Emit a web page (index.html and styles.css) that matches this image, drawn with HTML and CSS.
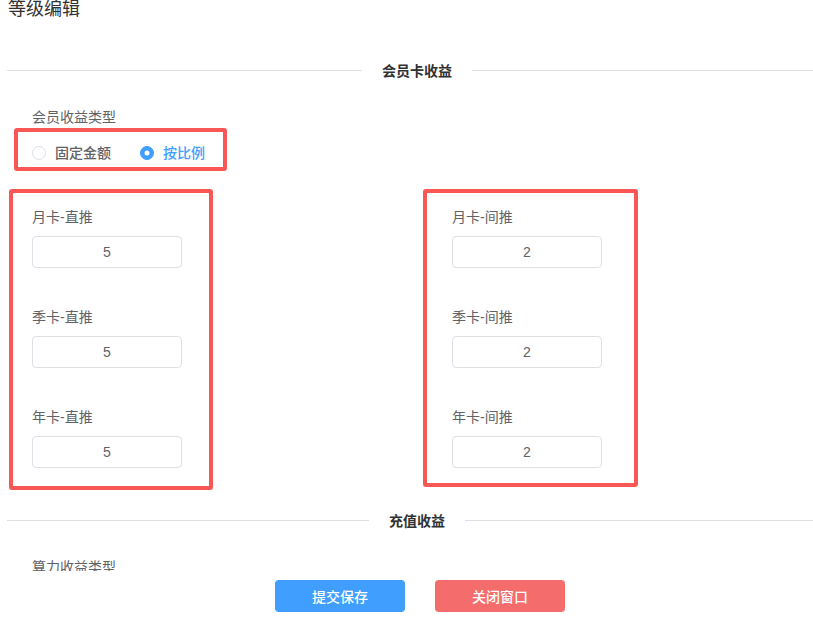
FILE: index.html
```html
<!DOCTYPE html>
<html lang="zh-CN">
<head>
    <meta charset="UTF-8">
    <meta name="viewport" content="width=device-width, initial-scale=1.0">
    <title>等级编辑</title>
    <link rel="stylesheet" href="styles.css">
</head>
<body>
    <div class="page">
        <div class="content">
            <h2 class="title">等级编辑</h2>

            <div class="divider"><span class="divider-text">会员卡收益</span></div>

            <div class="field-label">会员收益类型</div>
            <div class="radio-box mark">
                <label class="radio">
                    <span class="radio-dot"></span>
                    <span class="radio-text">固定金额</span>
                </label>
                <label class="radio checked">
                    <span class="radio-dot"></span>
                    <span class="radio-text">按比例</span>
                </label>
            </div>

            <div class="cols">
                <div class="box box-left mark">
                    <div class="item">
                        <div class="item-label">月卡-直推</div>
                        <input class="num-input" type="text" value="5">
                    </div>
                    <div class="item">
                        <div class="item-label">季卡-直推</div>
                        <input class="num-input" type="text" value="5">
                    </div>
                    <div class="item">
                        <div class="item-label">年卡-直推</div>
                        <input class="num-input" type="text" value="5">
                    </div>
                </div>

                <div class="box box-right mark">
                    <div class="item">
                        <div class="item-label">月卡-间推</div>
                        <input class="num-input" type="text" value="2">
                    </div>
                    <div class="item">
                        <div class="item-label">季卡-间推</div>
                        <input class="num-input" type="text" value="2">
                    </div>
                    <div class="item">
                        <div class="item-label">年卡-间推</div>
                        <input class="num-input" type="text" value="2">
                    </div>
                </div>
            </div>

            <div class="divider divider-second"><span class="divider-text">充值收益</span></div>

            <div class="field-label field-label-second">算力收益类型</div>
        </div>

        <div class="footer">
            <button class="btn btn-primary">提交保存</button>
            <button class="btn btn-danger">关闭窗口</button>
        </div>
    </div>
</body>
</html>
```

FILE: styles.css
```css
* {
    box-sizing: border-box;
}

body {
    margin: 0;
    background-color: #fff;
    font-family: "Liberation Sans", "Noto Sans CJK SC", sans-serif;
    color: #606266;
}

.page {
    width: 813px;
    height: 624px;
    overflow: hidden;
}

.content {
    height: 571px;
    overflow: hidden;
}

.title {
    margin: 0;
    padding-left: 8px;
    font-size: 18px;
    line-height: 18px;
    font-weight: normal;
    color: #303133;
}

/* dividers */
.divider {
    position: relative;
    width: 820px;
    height: 1px;
    margin: 52px 0 0 7px;
    background-color: #dcdfe6;
}

.divider-second {
    margin-top: 30px;
}

.divider-text {
    position: absolute;
    left: 50%;
    top: 50%;
    transform: translate(-50%, -50%);
    padding: 0 20px;
    background-color: #fff;
    font-size: 14px;
    line-height: 20px;
    font-weight: bold;
    color: #303133;
    white-space: nowrap;
}

.field-label {
    margin: 36px 0 0 32px;
    font-size: 14px;
    line-height: 20px;
    color: #606266;
    white-space: nowrap;
}

/* red annotation frames */
.mark {
    border: 4px solid #f95656;
    border-radius: 3px;
}

.radio-box {
    display: flex;
    align-items: center;
    width: 213px;
    height: 43px;
    margin: 1px 0 0 14px;
    padding: 6px 0 0 14px;
}

.radio {
    display: flex;
    flex-shrink: 0;
    align-items: center;
    margin-right: 29px;
    font-size: 14px;
    line-height: 20px;
    font-weight: 500;
    color: #606266;
    white-space: nowrap;
}

.radio-dot {
    position: relative;
    flex-shrink: 0;
    width: 14px;
    height: 14px;
    border: 1px solid #dcdfe6;
    border-radius: 50%;
    background-color: #fff;
}

.radio-text {
    padding-left: 9px;
}

.radio.checked {
    color: #409eff;
}

.radio.checked .radio-dot {
    border-color: #409eff;
    background-color: #409eff;
}

.radio.checked .radio-dot::after {
    content: "";
    position: absolute;
    left: 50%;
    top: 50%;
    width: 5px;
    height: 5px;
    border-radius: 50%;
    background-color: #fff;
    transform: translate(-50%, -50%);
}

/* two columns of inputs */
.cols {
    display: flex;
    align-items: flex-start;
    margin-top: 18px;
    padding-left: 9px;
}

.box {
    padding-top: 14px;
}

.box-left {
    width: 204px;
    height: 301px;
    padding-left: 19px;
}

.box-right {
    width: 215px;
    height: 298px;
    margin-left: 210px;
    padding-left: 25px;
}

.item + .item {
    margin-top: 39px;
}

.item-label {
    font-size: 14px;
    line-height: 20px;
    color: #606266;
}

.num-input {
    display: block;
    width: 150px;
    height: 32px;
    margin-top: 9px;
    padding: 0 15px;
    border: 1px solid #dcdfe6;
    border-radius: 4px;
    font-family: inherit;
    font-size: 14px;
    color: #606266;
    text-align: center;
    outline: none;
}

/* footer buttons */
.footer {
    display: flex;
    gap: 30px;
    margin-top: 9px;
    padding-left: 275px;
}

.btn {
    width: 130px;
    height: 32px;
    border: none;
    border-radius: 4px;
    font-family: inherit;
    font-size: 14px;
    font-weight: 500;
    color: #fff;
    cursor: pointer;
}

.btn-primary {
    background-color: #409eff;
}

.btn-danger {
    background-color: #f56c6c;
}
```
